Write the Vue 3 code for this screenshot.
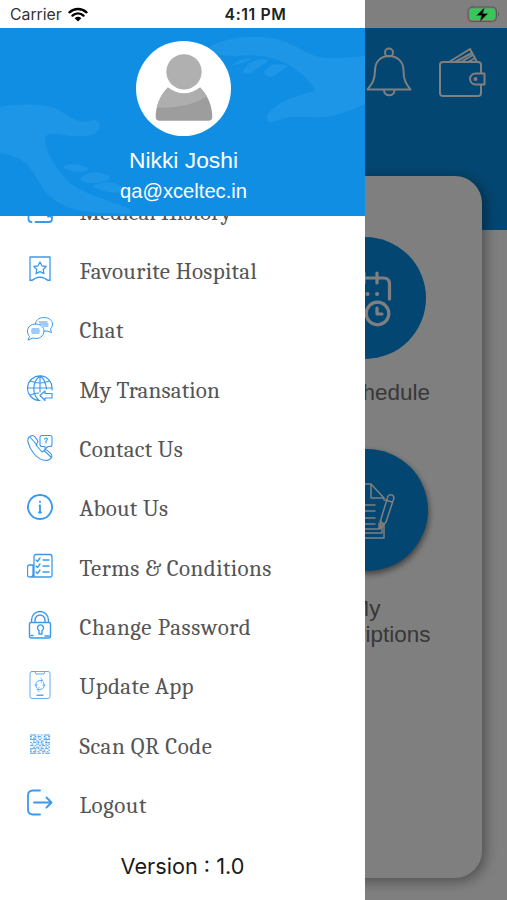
<template>
  <div class="screen">
    <main class="home">
      <header class="home-header">
        <svg class="bell" viewBox="0 0 46 50">
          <circle cx="23" cy="5.500" r="4" />
          <path
            d="M1.500 42.500c4-5 7.500-9 7.500-19C9 14.500 15 9 23 9s14.500 5.500 14.500 14.500c0 10 3 14 7 19zM18 43c0 7 10.500 7 10.500 0"
          />
        </svg>
        <svg class="wallet" viewBox="0 0 48 50">
          <path
            d="M43 22v-4q0-3-3-3H5q-3 0-3 3v28q0 3 3 3h35q3 0 3-3v-8M11 15 32 2l7 13M17 15l17-9M23 15l12-7M30 15l7-4"
          />
          <path d="M46.500 26.500h-9a5.500 5.500 0 0 0 0 11h9zM43 26v-5M43 38v4" />
          <circle cx="37.500" cy="32" r="1" />
        </svg>
      </header>

      <section class="card">
        <div class="tile">
          <div class="tile-circle">
            <svg viewBox="0 0 60 60">
              <g stroke-width="3.200">
                <path d="M54.500 29V14q0-6-6-6H12q-6 0-6 6v32q0 6 6 6h15M15 3v10M29 3v10M42 3v10" />
                <circle cx="42.500" cy="43.500" r="11.300" />
                <path d="M42 38v6h5" />
              </g>
              <path d="M32.500 24h.1M42 24h.1M22 24h.1" stroke-width="4" />
            </svg>
          </div>
          <p>My Schedule</p>
        </div>
        <div class="tile second">
          <div class="tile-circle raised">
            <svg viewBox="0 0 60 60">
              <path
                d="M8 4h27l13 14v2M35 4v14h13M8 4v45h35v-6M14 25h25M14 31h25M14 38h25M14 44h25M12 49v4h34V43M16 53v5h32V44"
                stroke-width="1.500"
              />
              <path
                d="M52 16q2-2 4-1t2 3l-8 24-6 7 1-10zM49 20l7 2M44 41l4 3"
                stroke-width="1.500"
              />
            </svg>
          </div>
          <p>My<br />Prescriptions</p>
        </div>
      </section>
    </main>

    <div class="backdrop"></div>

    <aside class="drawer">
      <div class="profile">
        <svg class="hands" viewBox="0 0 365 188">
          <path
            d="M207 20C225 9 260 5 283 13c22 8 27 17 47 17 14 0 25-1 35-2v48c-22 10-37 15-57 13-18-2-24 2-36 5-5 1-7-5-3-9 10-11 17-14 45-22 2-1-3-10-19-22-18-13-38-15-60-13-14 0-25-2-28-10z"
          />
          <path
            d="M231 37q8-6 21-7-8 7-21 7zM243 43c3-6 10-11 19-12 7 0 7 3 2 5l-14 9c-5 2-8 1-7-2zM264 44l7-7q9-2 17 1l-16 11q-6 0-8-5z"
          />
          <path
            d="M0 79c19-4 46-3 57 2 9 5 17 13 30 13 9-4 15-1 12 6-3 9-17 9-26 8-12-1-24-5-28 1 0 16 9 27 20 41 12 15 45 22 65 31 5 8-10 4-18 4-37 0-57-7-70-26-8-13-13-30-42-34z"
          />
          <path
            d="M64 140c0-6 20-4 24 0 0 6-20 4-24 0zM80 152c4-10 24-9 30-3-3 7-24 8-30 3zM93 158c8-6 26-5 32 4-8 5-24 2-32-4z"
          />
        </svg>
        <div class="avatar">
          <svg viewBox="0 0 94 94">
            <circle cx="47.500" cy="30.500" r="17.500" fill="#b0b0b0" />
            <path
              d="M31.500 46q16 12 32 0c8 8 12 19 12 29q0 4-4 4h-48q-4 0-4-4c0-10 4-21 12-29z"
              fill="#9d9d9d"
            />
            <path d="M31.500 46q16 12 32 0 4 4 6 9-18 12-49 11 3-12 11-20z" fill="#aeaeae" />
          </svg>
        </div>
        <div class="name">Nikki Joshi</div>
        <div class="email">qa@xceltec.in</div>
      </div>

      <nav class="menu">
        <ul>
          <li v-for="item in items" :key="item.label">
            <svg class="icon" viewBox="0 0 26 28" :stroke-width="item.stroke">
              <path :d="item.path" />
            </svg>
            <span :style="{ letterSpacing: item.spacing + 'px' }">{{ item.label }}</span>
          </li>
        </ul>
      </nav>

      <div class="version">Version : 1.0</div>
    </aside>

    <div class="status">
      <div class="carrier">
        Carrier
        <svg viewBox="0 0 20 15">
          <path d="M1.500 5.300a12.500 12.500 0 0 1 17 0M4.500 8.600a8 8 0 0 1 11 0" />
          <path d="M10 14.500 6.700 11.200a4.700 4.700 0 0 1 6.600 0z" class="solid" />
        </svg>
      </div>
      <div class="time">4:11 PM</div>
      <svg class="battery" viewBox="0 0 34 17">
        <rect x="1" y="1" width="28.500" height="14.500" rx="4" fill="none" stroke="#555a57" />
        <rect x="2.600" y="2.600" width="25.300" height="11.300" rx="2.500" fill="#36c759" />
        <path d="M31 6q2 2 0 5z" fill="#555" />
        <path
          d="m17.500 1.500-8 8h5l-1.500 6 8-8h-5z"
          fill="#000"
          stroke="#536b59"
          stroke-width=".6"
        />
      </svg>
    </div>
  </div>
</template>

<script setup>
// one row per string, x = filled module
const qrRows = [
  "xxxx.x.x.xxxx",
  "x..x.xx..x..x",
  "x.xx.x.x.xx.x",
  "xxxx..x..xxxx",
  "..x.xx.xx.x..",
  "x.xx.x.x..xxx",
  ".x..xx.xx.x.x",
  "xx.x..x.xx.x.",
  "..x.xx.x..x.x",
  "xxxx.x.xx.xx.",
  "x..x..xx.x..x",
  "x.xx.x..xx.x.",
  "xxxx.xx.x.xxx",
];

const qrPath = qrRows
  .flatMap((row, y) =>
    [...row].map((c, x) =>
      c === "x" ? `M${3.4 + x * 1.52} ${5 + y * 1.52}h1` : ""
    )
  )
  .join("");

const items = [
  {
    label: "Medical History",
    stroke: 1.8,
    spacing: 0.1,
    path: "M1.500 8v15q0 3 3 3M8.500 26H22q3 0 3-3v-2.500h-4M5 3h16q4 0 4 4v13",
  },
  {
    label: "Favourite Hospital",
    stroke: 1.3,
    spacing: 0.3,
    path: "M3 2h20v23.500q-3 0-5-2-5-2.500-10 0-2 2-5 2zM13 7l2 3.800 4.200.7-3 3 .7 4.200-3.900-2-3.900 2 .7-4.200-3-3 4.200-.7z",
  },
  {
    label: "Chat",
    stroke: 1,
    spacing: 0.3,
    path: "M8.500 8C10 4 13 2.500 17 2.500c5 0 8.500 3 8.500 6.500 0 3-1.500 4-2 5l1 3.500-4.500-1.500-3 .2M8.500 9C4 9 .5 12 .5 16c0 3 1 4 2 5.500L1 25l5-2c6 2 11-2 11-7 0-4-3.500-7-8.500-7zM5 14h7M4.500 16h8M5 18h7M12 7h8M13 9h8M16 11h5",
  },
  {
    label: "My Transation",
    stroke: 1.2,
    spacing: 0.15,
    path: "M25 16A12.300 12.300 0 1 0 13 26.500M13 2v16M13 2C5 8 5 20 11.500 26M13 2c5 3 6 8 6.500 13M3.500 7q9 4 19 0M1 14h24M3.500 21q4-2 8-2M13 21.500l5-4.500v2.500h7v4.500h-7v2.500z",
  },
  {
    label: "Contact Us",
    stroke: 1.1,
    spacing: 0.25,
    path: "M5 2.500Q0 4 1 9c2 8 8 16 15 18 4 1 8 0 9-4 0-2-5-6-6.500-6.500L15 19l-6-7 2-3.500C10 6 7 2 5 2.500zM3 4l7 8M17 17.500l7.500 7M15 2.500h8q2 0 2 2v7q0 2-2 2h-2L18 16v-2.500h-3q-2 0-2-2v-7q0-2 2-2zM17.500 6q2-2 3 0l-1.500 2v2",
  },
  {
    label: "About Us",
    stroke: 1.8,
    spacing: 0.3,
    path: "M13 2a12 12 0 1 0 .01 0M13 8.500v.5M12.500 12.500h.5v7M12 19.500h2",
  },
  {
    label: "Terms & Conditions",
    stroke: 1.3,
    spacing: 0.4,
    path: "M7 24V5q0-2.500 2-2.500h14q2 0 2 2.500v18q0 2-2 2H3q-2.500 0-2.500-2V15q0-2 2-2H6M6 13v9q0 3-2.500 3M9 8l1.500 1.500L13 6M9 14l1.500 1.500L13 12M9 20l1.500 1.500L13 18M16 8h6M16 14h6M16 20h6",
  },
  {
    label: "Change Password",
    stroke: 1.4,
    spacing: 0.63,
    path: "M4.500 11V9a8.500 8.500 0 0 1 17 0v2M8 11V9a5 5 0 0 1 10 0v2M4 11.500h18q1.500 0 1.500 1.500v12q0 2-2 2h-17q-2 0-2-2V13q0-1.500 1.500-1.500zM12 23v-3.500a3 3 0 1 1 3 0V23zM4 24.500h2M18 25h4",
  },
  {
    label: "Update App",
    stroke: 0.8,
    spacing: 0.37,
    path: "M5 .5h16q2 0 2 2v23q0 2-2 2H5q-2 0-2-2v-23q0-2 2-2zM8 .5l1 2.500h8l1-2.500M10 24h6M10 24.500h6M9.500 16.500q-2.500-6 3.500-7h2M14 7.500l2 2-2 2M16.500 11.500q2.500 6-3.500 7h-2M12 16.500l-2 2 2 2M8 14h2M16 14h2",
  },
  { label: "Scan QR Code", stroke: 0.9, spacing: 0.5, path: qrPath },
  {
    label: "Logout",
    stroke: 1.8,
    spacing: 0.6,
    path: "M13 1.500H6q-5 0-5 5v14q0 5 5 5h7M7 13.500h17.500M19.500 8.500l5 5-5 5",
  },
];
</script>

<style>
body {
  margin: 0;
}
</style>

<style scoped>
.screen {
  position: relative;
  width: 507px;
  height: 900px;
  overflow: hidden;
  background: #fff;
  font-family: "Liberation Sans", Arial, sans-serif;
}

svg {
  fill: none;
  stroke-linecap: round;
  stroke-linejoin: round;
}

.home {
  padding-top: 28px;
}

.home-header {
  height: 202px;
  box-sizing: border-box;
  padding: 19px 21px 0 0;
  display: flex;
  justify-content: flex-end;
  gap: 26px;
  background: #088de4;
}

.home-header svg {
  stroke: #fff;
  stroke-width: 2;
}

.bell {
  width: 46px;
  height: 50px;
}

.wallet {
  width: 48px;
  height: 50px;
}

.card {
  box-sizing: border-box;
  width: 457px;
  height: 702px;
  margin: -54px 0 0 25px;
  padding: 61px 0 0 226px;
  border-radius: 27px;
  background: #fff;
  box-shadow: 3px 3px 14px rgba(0, 0, 0, 0.4);
}

.tile {
  width: 228px;
  height: 212px;
  display: flex;
  flex-direction: column;
  align-items: center;
}

.tile.second {
  padding-left: 2px;
}

.tile-circle {
  width: 122px;
  height: 122px;
  display: flex;
  align-items: center;
  justify-content: center;
  border-radius: 50%;
  background: #088de4;
}

.tile-circle.raised {
  box-shadow: 1px 3px 6px rgba(0, 0, 0, 0.5);
}

.tile-circle svg {
  width: 60px;
  height: 60px;
  margin-top: 3px;
  stroke: #fff;
}

.tile-circle.raised svg {
  margin: 0 3px 0 0;
}

.tile p {
  margin: 21px 0 0;
  text-align: center;
  font-size: 22.5px;
  line-height: 26px;
  color: #707070;
}

.tile.second p {
  margin: 25px 3px 0 0;
}

.backdrop {
  position: absolute;
  inset: 0;
  background: rgba(0, 0, 0, 0.5);
}

.drawer {
  position: absolute;
  top: 0;
  left: 0;
  box-sizing: border-box;
  width: 365px;
  height: 900px;
  padding-top: 28px;
  display: flex;
  flex-direction: column;
  background: #fff;
}

.profile {
  position: relative;
  height: 188px;
  display: flex;
  flex-direction: column;
  align-items: center;
  background: #108ee4;
  color: #fff;
}

.hands {
  position: absolute;
  inset: 0;
  width: 365px;
  height: 188px;
  fill: #1d96e7;
}

.avatar {
  position: relative;
  width: 95px;
  height: 95px;
  margin: 13px 0 0 1px;
  border-radius: 50%;
  background: #fff;
}

.name,
.email {
  position: relative;
}

.name {
  margin: 10px 0 0 2px;
  font-size: 22.8px;
  line-height: 28px;
}

.email {
  margin: 4px 0 0 2px;
  font-size: 20.2px;
  line-height: 26px;
}

.menu {
  height: 619px;
  overflow: hidden;
}

.menu ul {
  margin: -33px 0 0;
  padding: 0;
  list-style: none;
}

.menu li {
  height: 59.33px;
  display: flex;
  align-items: center;
  padding-left: 27px;
}

.icon {
  width: 26px;
  height: 28px;
  margin: -5px 26.5px 0 0;
  stroke: #3b99ec;
}

.menu span {
  font-family: Cambria, Caladea, "Liberation Serif", serif;
  font-size: 23px;
  line-height: 28px;
  white-space: nowrap;
  color: #555;
}

.version {
  margin-top: 17px;
  text-align: center;
  font-family: Inter, sans-serif;
  font-size: 21.7px;
  line-height: 28px;
  color: #1a1a1a;
}

.status {
  position: absolute;
  top: 0;
  left: 0;
  box-sizing: border-box;
  width: 507px;
  height: 29px;
  padding: 0 6px 0 10px;
  display: grid;
  grid-template-columns: 1fr auto 1fr;
  align-items: center;
  font-family: Inter, sans-serif;
  font-size: 15.8px;
}

.carrier {
  display: flex;
  align-items: center;
  gap: 6px;
  color: #333;
}

.carrier svg {
  width: 20px;
  height: 15px;
  stroke: #000;
  stroke-width: 2.4;
}

.carrier .solid {
  fill: #000;
  stroke: none;
}

.time {
  font-weight: 600;
  letter-spacing: 0.6px;
  color: #222;
}

.battery {
  justify-self: end;
  width: 34px;
  height: 17px;
}
</style>
